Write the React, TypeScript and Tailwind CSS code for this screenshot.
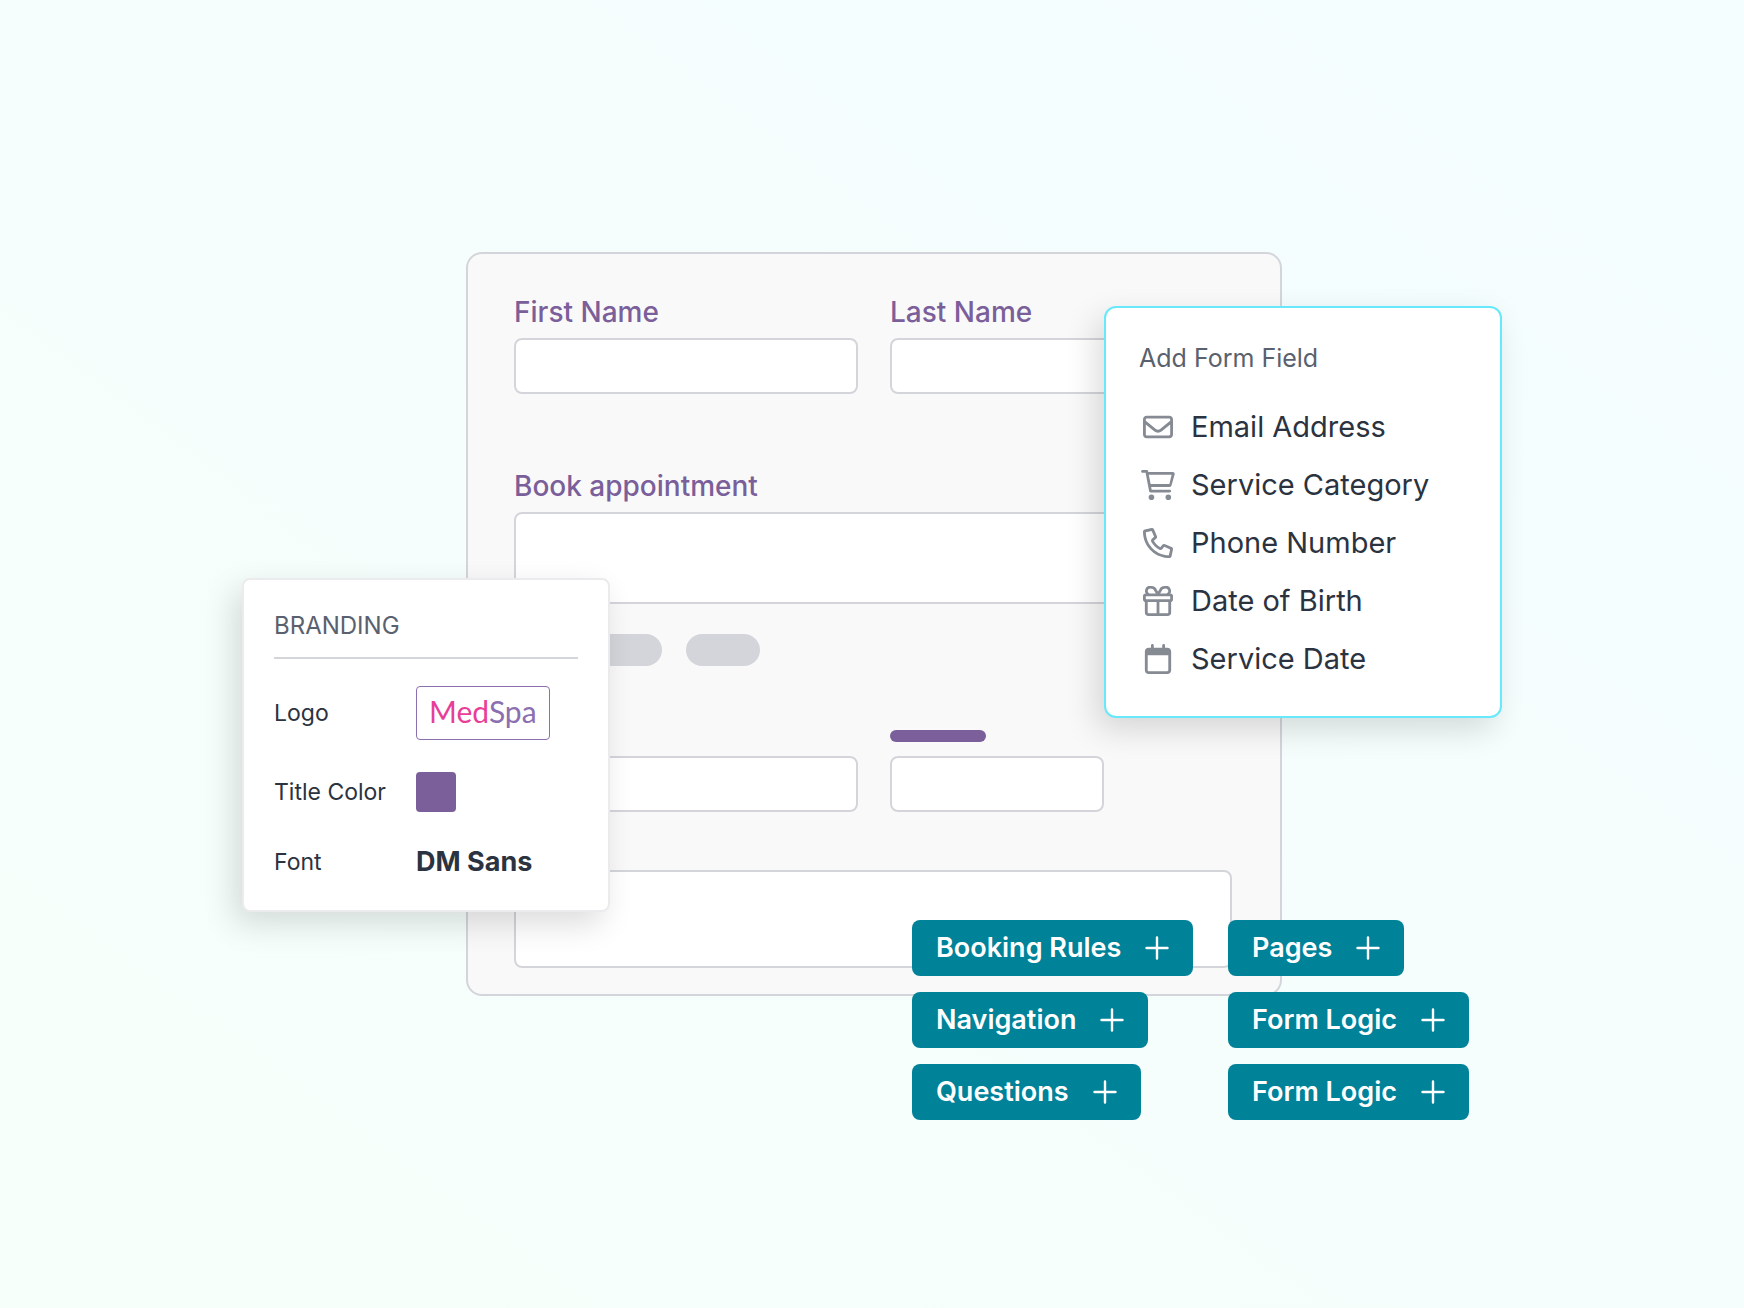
import React from 'react';
import { FaRegCalendar, FaRegEnvelope } from 'react-icons/fa6';

const CartIcon: React.FC = () => (
  <svg className="h-[30px] w-[34px]" fill="currentColor" viewBox="0 0 576 512" aria-hidden="true">
    <path d="M24 0C10.700 0 0 10.700 0 24S10.700 48 24 48H76.100l60.300 316.500c2.200 11.300 12.100 19.500 23.600 19.500H488c13.300 0 24-10.700 24-24s-10.700-24-24-24H179.900l-9.100-48h317c14.300 0 26.900-9.500 30.800-23.300l54-192C578.300 52.300 563 32 541.800 32H122l-2.400-12.500C117.400 8.200 107.500 0 96 0H24zM131.100 80H520.700L482.400 240H161.600L131.100 80zM176 512a48 48 0 1 0 0-96 48 48 0 1 0 0 96zm336-48a48 48 0 1 0-96 0 48 48 0 1 0 96 0z" />
  </svg>
);

const PhoneIcon: React.FC = () => (
  <svg className="size-[30px]" fill="currentColor" viewBox="0 0 512 512" aria-hidden="true">
    <path d="M375.800 275.200c-16.400-7-35.400-2.400-46.700 11.400l-33.200 40.600c-46-26.700-84.400-65.100-111.100-111.100L225.300 183c13.800-11.300 18.500-30.300 11.400-46.700l-48-112C181.200 6.700 162.300-3.100 143.600 .9l-112 24C13.200 28.800 0 45.100 0 64C0 300.700 183.500 494.500 416 510.900c10.600 .8 21.300 1.200 32.100 1.200c18.900 0 35.200-13.200 39.100-31.600l24-112c4-18.700-5.800-37.600-23.400-45.100l-112-48zM441.500 464C225.800 460.500 51.500 286.200 48.100 70.500l99.200-21.300 43 100.400L154.400 179c-18.200 14.900-22.900 40.800-11.100 61.200c30.900 53.300 75.300 97.700 128.600 128.600c20.400 11.800 46.300 7.100 61.200-11.100l29.400-35.900 100.400 43L441.500 464z" />
  </svg>
);

const GiftIcon: React.FC = () => (
  <svg className="size-[30px]" fill="none" stroke="currentColor" strokeWidth="48" viewBox="0 0 512 512" aria-hidden="true">
    <rect x="24" y="152" width="464" height="96" rx="24" />
    <path d="M56 248v200a40 40 0 0 0 40 40h320a40 40 0 0 0 40-40V248M256 248v240" />
    <path d="M256 146l-40-72C202 44 180 24 150 24a60 60 0 0 0-52 122M256 146l40-72C310 44 332 24 362 24a60 60 0 0 1 52 122" />
  </svg>
);

const PlusIcon: React.FC = () => (
  <svg className="size-6" fill="none" stroke="currentColor" viewBox="0 0 24 24" aria-hidden="true">
    <path strokeLinecap="round" strokeWidth="2.400" d="M12 1.500v21M1.500 12h21" />
  </svg>
);

const formFields = [
  { label: 'Email Address', icon: <FaRegEnvelope className="size-[30px]" /> },
  { label: 'Service Category', icon: <CartIcon /> },
  { label: 'Phone Number', icon: <PhoneIcon /> },
  { label: 'Date of Birth', icon: <GiftIcon /> },
  { label: 'Service Date', icon: <FaRegCalendar className="size-[30px]" /> },
];

const actionColumns = [
  ['Booking Rules', 'Navigation', 'Questions'],
  ['Pages', 'Form Logic', 'Form Logic'],
];

const inputClass = 'block w-full rounded-lg border-2 border-[#d4d5da] bg-white px-4 focus:outline-none';
const labelClass = 'block text-[28px] leading-9 font-medium text-[#7a5f9a]';

const BookingForm: React.FC = () => (
  <form className="ml-[224px] mr-[220px] rounded-2xl border-2 border-[#d4d5da] bg-[#f9f9f9] pt-10 pr-12 pb-[26px] pl-[46px]">
    <div className="flex gap-8">
      <div className="w-[344px]">
        <label htmlFor="first-name" className={labelClass}>First Name</label>
        <input id="first-name" type="text" className={`${inputClass} mt-2 h-14`} />
      </div>
      <div className="flex-1">
        <label htmlFor="last-name" className={labelClass}>Last Name</label>
        <input id="last-name" type="text" className={`${inputClass} mt-2 h-14`} />
      </div>
    </div>

    <label htmlFor="appointment" className={`${labelClass} mt-[74px]`}>Book appointment</label>
    <input id="appointment" type="text" className={`${inputClass} mt-2 h-[92px]`} />

    <div className="mt-[30px] flex gap-6">
      <span className="h-8 w-[148px] rounded-full bg-[#d4d5da]" />
      <span className="h-8 w-[74px] rounded-full bg-[#d4d5da]" />
    </div>

    <div className="mt-16 flex gap-8">
      <div className="w-[344px]">
        <div className="mb-3.5 h-3 w-24 rounded-full bg-[#7a5f9a]" />
        <input type="text" aria-label="Detail" className={`${inputClass} h-14`} />
      </div>
      <div className="w-[214px]">
        <div className="mb-3.5 h-3 w-24 rounded-full bg-[#7a5f9a]" />
        <input type="text" aria-label="Short detail" className={`${inputClass} h-14`} />
      </div>
    </div>

    <textarea aria-label="Notes" className={`${inputClass} mt-[58px] h-[98px] resize-none`} />
  </form>
);

const BrandingPanel: React.FC = () => (
  <section className="absolute top-[326px] left-0 w-[368px] rounded-lg border-2 border-[#ebebed] bg-white px-[30px] pt-[30px] pb-7 text-[23px] leading-8 text-[#2b3340] shadow-[-8px_12px_32px_rgba(0,0,0,0.14)]">
    <h2 className="border-b-2 border-[#d4d5da] pb-[15px] text-[24px] text-[#5a616e]">BRANDING</h2>
    <dl className="mt-[27px] grid grid-cols-[142px_1fr] items-center">
      <dt>Logo</dt>
      <dd className="flex">
        <span className="rounded border border-[#8b6fb0] px-3 pt-1.5 pb-2.5 font-[Lato,sans-serif] text-[30px] leading-9 text-[#8b6fb0]">
          <span className="text-[#e83e98]">Med</span>Spa
        </span>
      </dd>
      <dt className="mt-8">Title Color</dt>
      <dd className="mt-8 size-10 rounded bg-[#7a5f9a]" />
      <dt className="mt-[30px]">Font</dt>
      <dd className="mt-[30px] text-[27px] leading-10 font-bold">DM Sans</dd>
    </dl>
  </section>
);

const FormFieldPanel: React.FC = () => (
  <section className="absolute top-[54px] right-0 w-[398px] rounded-xl border-2 border-[#67e8fb] bg-white pt-8 pr-8 pb-7 pl-[33px] shadow-[-8px_12px_32px_rgba(0,0,0,0.14)]">
    <h2 className="text-[25px] leading-9 text-[#5a616e]">Add Form Field</h2>
    <ul className="mt-[22px] pl-0.5">
      {formFields.map((field) => (
        <li key={field.label}>
          <button type="button" className="flex h-[58px] items-center gap-4 text-[29px] whitespace-nowrap text-[#2b3340]">
            <span className="flex w-[34px] justify-center text-[#858a93]">{field.icon}</span>
            {field.label}
          </button>
        </li>
      ))}
    </ul>
  </section>
);

const App: React.FC = () => {
  return (
    <main className="min-h-screen bg-linear-to-tr from-[#f7fffa] to-[#f4fdff] px-6 pt-[252px] pb-[188px] font-[Inter,sans-serif]">
      <div className="relative mx-auto max-w-[1260px] pb-[124px]">
        <BookingForm />
        <BrandingPanel />
        <FormFieldPanel />
        <div className="absolute top-[668px] left-[670px] grid grid-cols-[316px_auto]">
          {actionColumns.map((actions, column) => (
            <div key={column} className="flex flex-col items-start gap-4">
              {actions.map((action, index) => (
                <button
                  key={index}
                  type="button"
                  className="flex h-14 items-center gap-6 rounded-lg bg-[#008299] px-6 text-[27px] font-semibold text-white"
                >
                  {action}
                  <PlusIcon />
                </button>
              ))}
            </div>
          ))}
        </div>
      </div>
    </main>
  );
};

export default App;
